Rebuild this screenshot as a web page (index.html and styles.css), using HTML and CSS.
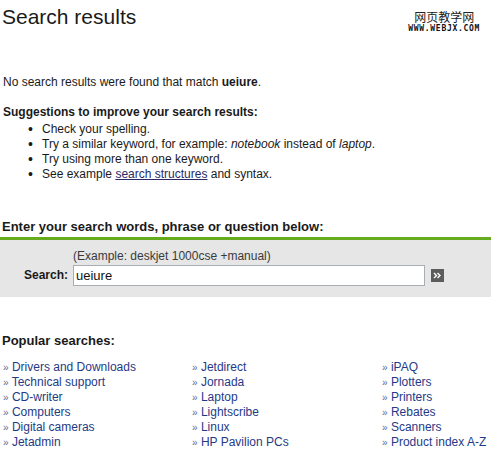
FILE: index.html
```html
<!DOCTYPE html>
<html lang="en">
<head>
  <meta charset="UTF-8" />
  <title>Search results</title>
  <link rel="stylesheet" href="styles.css">
</head>
<body>
  <div class="header">
    <h1>Search results</h1>
    <div class="mark">
      <span class="mark-cn">网页教学网</span>
      <span class="mark-url">WWW.WEBJX.COM</span>
    </div>
  </div>

  <p class="notice">No search results were found that match <b>ueiure</b>.</p>

  <h2 class="tips-title">Suggestions to improve your search results:</h2>
  <ul class="tips">
    <li>Check your spelling.</li>
    <li>Try a similar keyword, for example: <i>notebook</i> instead of <i>laptop</i>.</li>
    <li>Try using more than one keyword.</li>
    <li>See example <a href="#" class="plain-link">search structures</a> and syntax.</li>
  </ul>

  <h3 class="section-title">Enter your search words, phrase or question below:</h3>
  <div class="search-box">
    <div class="search-grid">
      <span></span>
      <span class="example">(Example: deskjet 1000cse +manual)</span>
      <span></span>
      <label for="q" class="search-label">Search:</label>
      <input type="text" id="q" class="search-input" value="ueiure" />
      <button class="go" aria-label="Search">
        <svg width="13" height="13" viewBox="0 0 13 13">
          <rect width="13" height="13" fill="#5c5c5c"/>
          <path d="M3 4l2.5 2.5L3 9M6.5 4L9 6.5 6.5 9" stroke="#fff" stroke-width="1.4" fill="none"/>
        </svg>
      </button>
    </div>
  </div>

  <h3 class="section-title popular-title">Popular searches:</h3>
  <div class="popular">
    <ul>
      <li><span class="raquo">»</span> <a href="#">Drivers and Downloads</a></li>
      <li><span class="raquo">»</span> <a href="#">Technical support</a></li>
      <li><span class="raquo">»</span> <a href="#">CD-writer</a></li>
      <li><span class="raquo">»</span> <a href="#">Computers</a></li>
      <li><span class="raquo">»</span> <a href="#">Digital cameras</a></li>
      <li><span class="raquo">»</span> <a href="#">Jetadmin</a></li>
    </ul>
    <ul>
      <li><span class="raquo">»</span> <a href="#">Jetdirect</a></li>
      <li><span class="raquo">»</span> <a href="#">Jornada</a></li>
      <li><span class="raquo">»</span> <a href="#">Laptop</a></li>
      <li><span class="raquo">»</span> <a href="#">Lightscribe</a></li>
      <li><span class="raquo">»</span> <a href="#">Linux</a></li>
      <li><span class="raquo">»</span> <a href="#">HP Pavilion PCs</a></li>
    </ul>
    <ul>
      <li><span class="raquo">»</span> <a href="#">iPAQ</a></li>
      <li><span class="raquo">»</span> <a href="#">Plotters</a></li>
      <li><span class="raquo">»</span> <a href="#">Printers</a></li>
      <li><span class="raquo">»</span> <a href="#">Rebates</a></li>
      <li><span class="raquo">»</span> <a href="#">Scanners</a></li>
      <li><span class="raquo">»</span> <a href="#">Product index A-Z</a></li>
    </ul>
  </div>
</body>
</html>
```

FILE: styles.css
```css
:root {
  --text: #1a1a1a;
  --green: #66aa1e;
  --panel: #e6e6e6;
  --link: #1f3a86;
}

body {
  margin: 0;
  font-family: "Liberation Sans", Arial, sans-serif;
  font-size: 12px;
  line-height: 15px;
  color: var(--text);
  background: #fff;
}

.header {
  display: flex;
  justify-content: space-between;
  padding: 0 11px 0 2px;
  height: 40px;
}

h1 {
  margin: 5px 0 0;
  font-size: 21px;
  line-height: 24px;
  font-weight: normal;
}

.mark {
  display: flex;
  flex-direction: column;
  align-items: center;
  padding-top: 9px;
}

.mark-cn {
  font-family: "Noto Sans CJK SC", sans-serif;
  font-size: 12px;
  line-height: 15px;
  color: #222;
}

.mark-url {
  font-family: "DejaVu Sans Mono", monospace;
  font-weight: bold;
  font-size: 8px;
  line-height: 8px;
  letter-spacing: 0.7px;
  color: #111;
  margin-top: 1px;
}

.notice {
  margin: 35px 0 0 3px;
}

.tips-title {
  margin: 15px 0 0 3px;
  font-size: 12px;
  line-height: 15px;
}

.tips {
  margin: 2px 0 0;
  padding-left: 42px;
  list-style: none;
}

.tips li::before {
  content: "•";
  display: inline-block;
  width: 14px;
  margin-left: -14px;
  font-size: 14px;
  line-height: 15px;
  vertical-align: top;
}

.plain-link {
  color: #2a2a66;
}

.section-title {
  margin: 0;
  padding-left: 2px;
  font-size: 13px;
  line-height: 16px;
}

.tips + .section-title {
  margin-top: 37px;
}

.search-box {
  margin-top: 2px;
  border-top: 3px solid var(--green);
  background: var(--panel);
  padding: 9px 0 11px;
}

.search-grid {
  display: grid;
  grid-template-columns: 68px 352px 13px;
  column-gap: 5px;
  row-gap: 1px;
  align-items: center;
}

.example {
  color: #3a3a3a;
}

.search-label {
  text-align: right;
  font-weight: bold;
}

.search-input {
  box-sizing: border-box;
  height: 21px;
  margin: 0;
  padding: 0 2px;
  border: 1px solid #a9aeb3;
  font-family: inherit;
  font-size: 13px;
  color: #111;
}

.go {
  margin: 0 0 0 1px;
  padding: 0;
  border: none;
  background: none;
  width: 13px;
  height: 13px;
  display: block;
}

.popular-title {
  margin-top: 36px;
}

.popular {
  display: grid;
  grid-template-columns: 189px 190px auto;
  padding: 11px 0 0 3px;
}

.popular ul {
  list-style: none;
  margin: 0;
  padding: 0;
}

.popular a {
  color: var(--link);
  text-decoration: none;
}

.raquo {
  color: #5b6d99;
  font-size: 10px;
}
```
